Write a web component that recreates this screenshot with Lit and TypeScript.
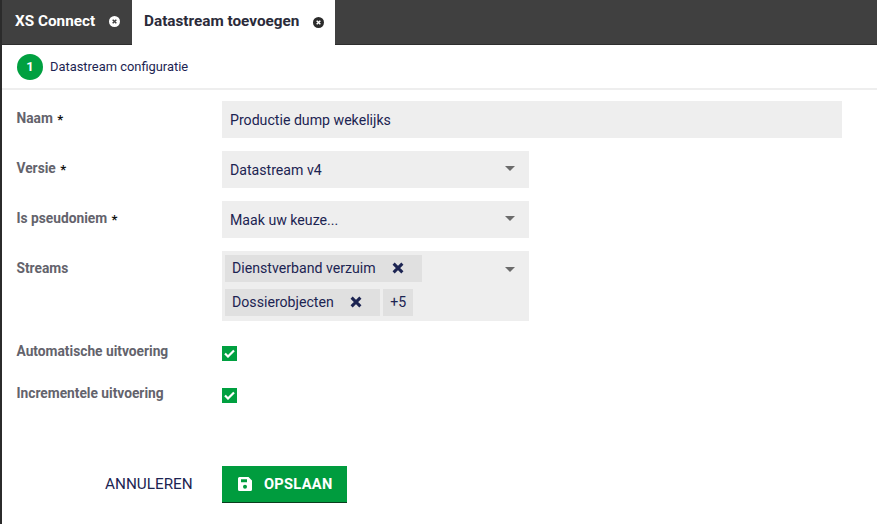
import { LitElement, html, css } from "lit";
import { customElement } from "lit/decorators.js";

const caret = html`<svg class="caret" width="10" height="5" viewBox="0 0 10 5"><path d="M0 0h10L5 5z" fill="#6b6b6b"/></svg>`;
const cross = html`<svg class="x" width="12" height="12" viewBox="0 0 12 12"><path d="M1.6 1.6l8.8 8.8M10.4 1.6l-8.8 8.8" stroke="#1c2452" stroke-width="3" fill="none"/></svg>`;
const tabClose = (bg: string, fg: string) => html`<svg class="tabx" width="11" height="11" viewBox="0 0 12 12"><circle cx="6" cy="6" r="6" fill="${bg}"/><path d="M4 4l4 4M8 4l-4 4" stroke="${fg}" stroke-width="1.6"/></svg>`;
const check = (cls: string) => html`<span class="check ${cls}"><svg width="11" height="9" viewBox="0 0 11 9"><path d="M1 4.5l3 3 6-6" stroke="#fff" stroke-width="2.2" fill="none"/></svg></span>`;

@customElement("app-root")
export class AppRoot extends LitElement {
  static styles = css`
    :host { display: block; width: 877px; height: 524px; overflow: hidden; background: #fff; font-family: "Roboto", "Liberation Sans", sans-serif; color: #1c2452; font-size: 14px; border-left: 2px solid #2b2b2b; box-sizing: border-box; }
    .tabs { display: flex; height: 45px; background: #404040; border-bottom: 1px solid #2e2e2e; box-sizing: border-box; }
    .tab { display: flex; align-items: center; font-weight: 700; font-size: 15.3px; gap: 14px; box-sizing: border-box; padding-bottom: 3px; }
    .tab.off { width: 130px; padding-left: 13px; color: #fff; }
    .tab.on { width: 203px; height: 45px; padding-left: 12px; background: #fff; color: #2b2b3a; }
    .tabx { margin-top: 2px; }
    .steps { height: 45px; display: flex; align-items: center; padding-left: 15px; gap: 7px; border-bottom: 2px solid #eee; box-sizing: border-box; font-size: 12.9px; }
    .num { width: 26px; height: 26px; border-radius: 50%; background: #00a040; color: #fff; font-weight: 700; display: flex; align-items: center; justify-content: center; font-size: 13px; }
    .form { display: grid; grid-template-columns: 205.5px 1fr; padding: 11px 0 0 14.5px; row-gap: 13px; }
    label { font-size: 13.75px; font-weight: 700; color: #63636c; padding-top: 9px; }
    .star { color: #111; font-size: 13px; margin-left: 1px; vertical-align: -1px; }
    .field { background: #eee; min-height: 37px; display: flex; align-items: center; justify-content: space-between; padding: 0 14px 0 8px; box-sizing: border-box; font-size: 14.15px; width: 307px; }
    .field.wide { width: 620px; }
    .caret { margin-top: -2px; }
    .multi { align-items: flex-start; padding: 4px 14px 5px 3px; height: 70px; }
    .chips { display: flex; flex-wrap: wrap; gap: 7px 3px; width: 240px; }
    .chip { height: 27px; background: #e0e0e0; display: flex; align-items: center; padding: 0 18.5px 1px 7px; gap: 16px; box-sizing: border-box; }
    .chip.more { padding: 0 7px 1px; width: 30px; }
    .multi .caret { margin-top: 12px; }
    label.opt { padding-top: 0; margin-top: 9px; }
    label.opt.next { margin-top: 11px; }
    .check { width: 15px; height: 15px; background: #00a040; display: flex; align-items: center; justify-content: center; margin-top: 12px; }
    .check.next { margin-top: 14px; }
    .actions { display: grid; grid-template-columns: 117px 125px; align-items: center; margin: 63px 0 0 103px; }
    .cancel { font-size: 15.3px; padding-bottom: 2px; }
    .save { height: 37px; background: #009c3e; color: #fff; border-bottom: 1px solid #0a3d1e; box-sizing: border-box; font-weight: 700; font-size: 14.6px; display: flex; align-items: center; padding-left: 16px; gap: 12px; letter-spacing: .3px; }
  `;
  render() {
    return html`
      <div class="tabs">
        <div class="tab off">XS Connect ${tabClose("#fff", "#404040")}</div>
        <div class="tab on">Datastream toevoegen ${tabClose("#2b2b2b", "#fff")}</div>
      </div>
      <div class="steps"><span class="num">1</span>Datastream configuratie</div>
      <div class="form">
        <label>Naam <span class="star">*</span></label><div class="field wide">Productie dump wekelijks</div>
        <label>Versie <span class="star">*</span></label><div class="field">Datastream v4 ${caret}</div>
        <label>Is pseudoniem <span class="star">*</span></label><div class="field">Maak uw keuze... ${caret}</div>
        <label>Streams</label>
        <div class="field multi"><div class="chips"><span class="chip">Dienstverband verzuim ${cross}</span><span class="chip">Dossierobjecten ${cross}</span><span class="chip more">+5</span></div>${caret}</div>
        <label class="opt">Automatische uitvoering</label>${check("")}
        <label class="opt next">Incrementele uitvoering</label>${check("next")}
      </div>
      <div class="actions"><span class="cancel">ANNULEREN</span>
        <div class="save"><svg width="14" height="14" viewBox="0 0 14 14"><path fill-rule="evenodd" d="M1.5 0H10.5L14 3.5V12.5A1.5 1.5 0 0 1 12.5 14H1.5A1.5 1.5 0 0 1 0 12.5V1.5A1.5 1.5 0 0 1 1.5 0ZM3 2.2V5.2H9V2.2ZM7 7.8A2 2 0 1 0 7 11.8A2 2 0 1 0 7 7.8Z" fill="#fff"/></svg>OPSLAAN</div>
      </div>`;
  }
}
